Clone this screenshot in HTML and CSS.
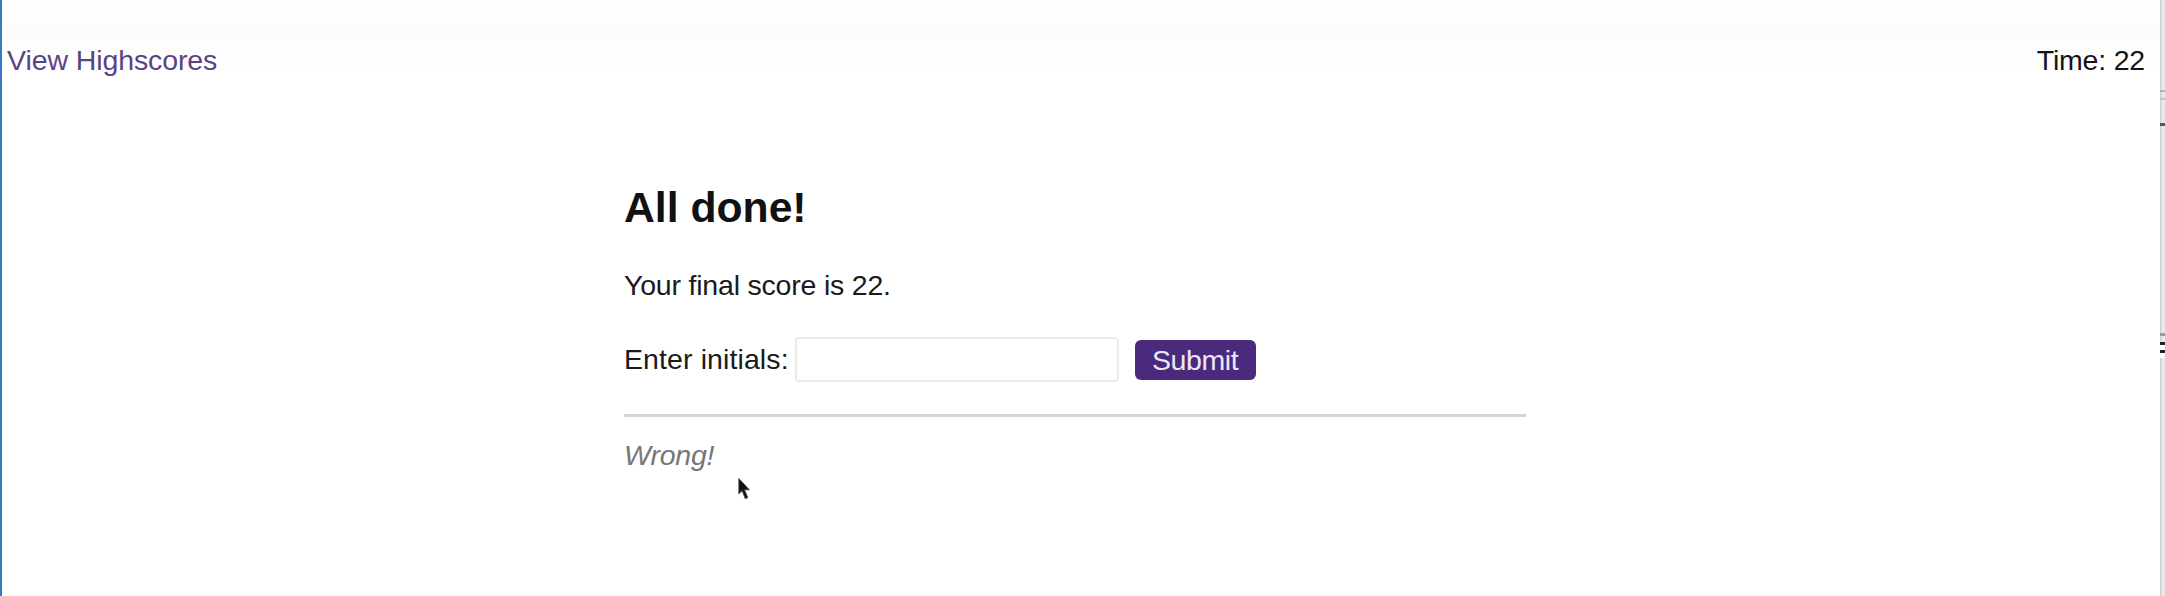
FILE: index.html
```html
<!DOCTYPE html>
<html lang="en">
<head>
<meta charset="utf-8">
<title>Code Quiz</title>
<link rel="stylesheet" href="styles.css">
</head>
<body>
<div class="frame">
  <div class="edge-left"></div>
  <div class="page">
    <header class="topbar">
      <a class="highscores" href="#">View Highscores</a>
      <div class="timer">Time: <span>22</span></div>
    </header>
    <main class="wrap">
      <section class="card">
        <h2 class="title">All done!</h2>
        <p class="score">Your final score is 22.</p>
        <form class="entry" onsubmit="return false">
          <label class="entry-label" for="initials">Enter initials:</label>
          <input class="entry-input" id="initials" type="text">
          <button class="entry-btn" type="submit">Submit</button>
        </form>
        <hr class="rule">
        <p class="feedback">Wrong!</p>
        <svg class="pointer" width="16" height="28" viewBox="0 0 16 28" aria-hidden="true">
          <path d="M1 1 L1 20 L5 16 L9 26 L12 24.5 L8 15 L14 15 Z" fill="#111" stroke="#444" stroke-width="1"/>
        </svg>
      </section>
    </main>
  </div>
  <div class="edge-right">
    <i class="mark m1"></i>
    <i class="mark m2"></i>
    <i class="mark m3"></i>
    <i class="mark m4"></i>
    <i class="mark m5"></i>
  </div>
</div>
</body>
</html>
```
FILE: styles.css
```css
html, body {
  margin: 0;
  padding: 0;
  height: 100%;
  background: #ffffff;
}
body {
  font-family: "Liberation Sans", Arial, sans-serif;
  font-size: 28.5px;
  color: #1a1a1a;
  overflow: hidden;
}
.frame {
  display: flex;
  height: 596px;
}
.edge-left {
  width: 2px;
  background: #3b78c2;
  flex: none;
}
.edge-right {
  width: 5px;
  flex: none;
  background: linear-gradient(to right, #c9c9c9, #e6e6e6 40%, #ededed);
  display: flex;
  flex-direction: column;
}
.mark {
  display: block;
  height: 2px;
  background: #8a8a8a;
}
.m1 { margin-top: 90px; background: #b0b0b0; }
.m2 { margin-top: 6px; background: #c0c0c0; }
.m3 { margin-top: 23px; background: #555; height: 3px; }
.m4 { margin-top: 207px; background: #9a9a9a; height: 3px; }
.m5 { margin-top: 6px; height: 16px; background: repeating-linear-gradient(#222 0 3px, #fff 3px 8px); }
.page {
  flex: 1;
  display: flex;
  flex-direction: column;
  min-width: 0;
}
.topbar {
  display: flex;
  justify-content: space-between;
  align-items: center;
  padding: 44px 15px 0 5px;
  line-height: 33px;
  background: linear-gradient(#fff 0, #fdfcfd 40%, #fff 100%);
}
.highscores {
  color: #5a4384;
  text-decoration: none;
  letter-spacing: -0.1px;
}
.timer {
  color: #141414;
  letter-spacing: -0.2px;
}
.wrap {
  display: flex;
  justify-content: center;
  padding-right: 12px;
}
.card {
  width: 902px;
  position: relative;
  padding-top: 106px;
}
.title {
  margin: 0;
  font-size: 42.7px;
  font-weight: bold;
  line-height: 49px;
  color: #111;
}
.score {
  margin: 37px 0 0;
  line-height: 33px;
  letter-spacing: -0.2px;
}
.entry {
  display: flex;
  align-items: center;
  margin-top: 35px;
  height: 45px;
}
.entry-label {
  line-height: 33px;
  letter-spacing: 0.1px;
}
.entry-input {
  margin: 0 0 0 6px;
  width: 324px;
  height: 45px;
  box-sizing: border-box;
  border: 2px solid #ececec;
  border-radius: 4px;
  background: #fff;
  font: inherit;
  padding: 0 8px;
}
.entry-btn {
  margin-left: 16px;
  width: 121px;
  height: 40px;
  box-sizing: border-box;
  border: none;
  border-radius: 6px;
  background: #4b2a7e;
  color: #ece6f5;
  font-family: "Liberation Sans", Arial, sans-serif;
  font-size: 28.5px;
  line-height: 40px;
  padding: 0;
  letter-spacing: -0.4px;
}
.rule {
  margin: 32px 0 0;
  border: none;
  height: 3px;
  background: #d6d5d8;
}
.feedback {
  margin: 22px 0 0;
  font-style: italic;
  color: #777;
  line-height: 33px;
  letter-spacing: -0.3px;
}
.pointer {
  position: absolute;
  left: 114px;
  top: 399px;
  width: 13px;
  height: 26px;
}
```
